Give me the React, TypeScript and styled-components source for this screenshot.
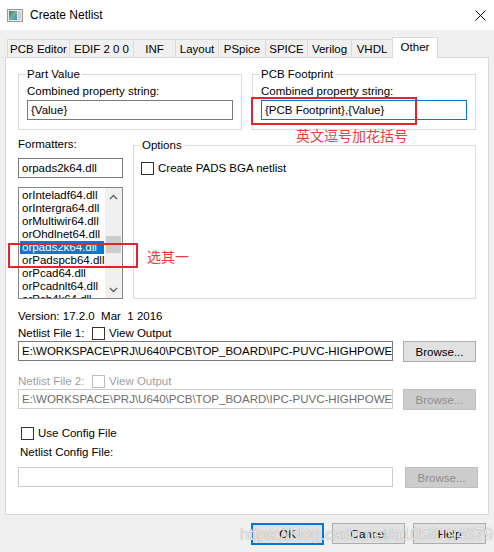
import React from 'react';
import styled, { createGlobalStyle } from 'styled-components';

const Global = createGlobalStyle`
  html, body { margin: 0; padding: 0; background: #f0f0f0; }
  body { font-family: "Liberation Sans", Arial, sans-serif; font-size: 11px; color: #000; }
  * { box-sizing: border-box; }
`;

const Window = styled.div`
  width: 494px;
  height: 552px;
  background: #f0f0f0;
  display: flex;
  flex-direction: column;
  position: relative;
  overflow: hidden;
`;

const TitleBar = styled.div`
  height: 30px;
  background: #fff;
  display: flex;
  align-items: center;
  padding-left: 7px;
  padding-right: 8px;
  gap: 7px;
  flex-shrink: 0;
`;

const TitleText = styled.span`
  font-size: 12px;
  color: #000;
`;

const CloseBtn = styled.div`
  margin-left: auto;
  width: 11px;
  height: 11px;
  display: flex;
`;

const Body = styled.div`
  padding: 7px 5px 0 5px;
  display: flex;
  flex-direction: column;
`;

const TabStrip = styled.div`
  display: flex;
  align-items: flex-end;
  padding-left: 2px;
  height: 21px;
  position: relative;
  z-index: 1;
  margin-bottom: -1px;
`;

const Tab = styled.div<{ $w: number; $active?: boolean }>`
  width: ${(p) => p.$w}px;
  height: ${(p) => (p.$active ? 21 : 19)}px;
  border: 1px solid #d9d9d9;
  border-right: ${(p) => (p.$active ? '1px solid #d9d9d9' : 'none')};
  border-bottom: ${(p) => (p.$active ? 'none' : '1px solid #d9d9d9')};
  background: ${(p) => (p.$active ? '#fff' : '#f0f0f0')};
  display: flex;
  align-items: center;
  justify-content: center;
  font-size: 11.5px;
  padding-bottom: ${(p) => (p.$active ? 3 : 0)}px;
`;

const Panel = styled.div`
  height: 458px;
  border: 1px solid #d9d9d9;
  background: #fff;
  padding: 9px 12px 0 12px;
  display: flex;
  flex-direction: column;
`;

const Row = styled.div<{ $gap?: number; $mt?: number }>`
  display: flex;
  gap: ${(p) => p.$gap ?? 0}px;
  margin-top: ${(p) => p.$mt ?? 0}px;
  align-items: flex-start;
`;

const Group = styled.fieldset<{ $w: number; $h?: number; $mt?: number }>`
  margin: ${(p) => p.$mt ?? 0}px 0 0 0;
  padding: 0 8px 9px 8px;
  border: 1px solid #dcdcdc;
  width: ${(p) => p.$w}px;
  ${(p) => (p.$h ? `height: ${p.$h}px;` : '')}
  min-width: 0;
  display: block;
`;

const Legend = styled.legend`
  padding: 0 2px;
  margin-left: -2px;
  line-height: 15px;
  font-size: 11.5px;
`;

const Label = styled.div<{ $mt?: number; $ml?: number; $w?: number; $disabled?: boolean }>`
  line-height: 15px;
  font-size: 11.5px;
  margin-top: ${(p) => p.$mt ?? 0}px;
  margin-left: ${(p) => p.$ml ?? 0}px;
  ${(p) => (p.$w ? `width: ${p.$w}px; flex-shrink: 0;` : '')}
  color: ${(p) => (p.$disabled ? '#a0a0a0' : '#000')};
  white-space: nowrap;
`;

const TextBox = styled.div<{ $w?: number; $mt?: number; $focus?: boolean; $disabled?: boolean }>`
  width: ${(p) => (p.$w ? `${p.$w}px` : '100%')};
  height: 20px;
  margin-top: ${(p) => p.$mt ?? 0}px;
  border: 1px solid ${(p) => (p.$focus ? '#0078d7' : p.$disabled ? '#cccccc' : '#7a7a7a')};
  background: #fff;
  color: ${(p) => (p.$disabled ? '#6d6d6d' : '#000')};
  font-size: 11.5px;
  line-height: 18px;
  padding-left: 3px;
  white-space: nowrap;
  overflow: hidden;
  flex-shrink: 0;
`;

const Button = styled.div<{ $w?: number; $disabled?: boolean; $default?: boolean }>`
  width: ${(p) => p.$w ?? 73}px;
  height: ${(p) => (p.$default ? 22 : 21)}px;
  border: ${(p) => (p.$default ? '2px solid #0078d7' : p.$disabled ? '1px solid #bfbfbf' : '1px solid #adadad')};
  background: ${(p) => (p.$disabled ? '#cccccc' : '#e1e1e1')};
  color: ${(p) => (p.$disabled ? '#8c8c8c' : '#000')};
  display: flex;
  align-items: center;
  justify-content: center;
  font-size: 11.5px;
  flex-shrink: 0;
`;

const CheckRow = styled.div<{ $mt?: number; $ml?: number }>`
  display: flex;
  align-items: center;
  gap: 4px;
  margin-top: ${(p) => p.$mt ?? 0}px;
  margin-left: ${(p) => p.$ml ?? 0}px;
  height: 15px;
  line-height: 15px;
  font-size: 11.5px;
  white-space: nowrap;
`;

const Box = styled.div<{ $disabled?: boolean }>`
  width: 13px;
  height: 13px;
  border: 1px solid ${(p) => (p.$disabled ? '#bcbcbc' : '#333')};
  background: #fff;
  flex-shrink: 0;
`;

const CheckText = styled.span<{ $disabled?: boolean }>`
  color: ${(p) => (p.$disabled ? '#a0a0a0' : '#000')};
`;

const Column = styled.div<{ $w: number }>`
  width: ${(p) => p.$w}px;
  display: flex;
  flex-direction: column;
  flex-shrink: 0;
`;

const ListBox = styled.div`
  margin-top: 9px;
  width: 105px;
  height: 112px;
  border: 1px solid #828790;
  display: flex;
  background: #fff;
`;

const ListItems = styled.div`
  flex: 1;
  padding: 1px 1px 0 1px;
  overflow: hidden;
`;

const ListItem = styled.div<{ $sel?: boolean }>`
  height: 13px;
  line-height: 13px;
  font-size: 11.5px;
  padding-left: 2px;
  background: ${(p) => (p.$sel ? '#0078d7' : 'transparent')};
  color: ${(p) => (p.$sel ? '#fff' : '#000')};
  white-space: nowrap;
`;

const ScrollBar = styled.div`
  width: 17px;
  background: #f0f0f0;
  display: flex;
  flex-direction: column;
`;

const ScrollBtn = styled.div`
  height: 17px;
  display: flex;
  align-items: center;
  justify-content: center;
  flex-shrink: 0;
`;

const Track = styled.div`
  flex: 1;
  display: flex;
  flex-direction: column;
`;

const Thumb = styled.div`
  height: 17px;
  background: #cdcdcd;
  margin: 0 1px;
`;

const Footer = styled.div`
  display: flex;
  justify-content: flex-end;
  gap: 8px;
  padding: 8px 3px 0 0;
`;

const Annot = styled.div`
  position: absolute;
  border: 2px solid #e3242b;
`;

const AnnotText = styled.div`
  position: absolute;
  color: #ee3b3b;
  font-family: "Noto Sans CJK SC", sans-serif;
  font-size: 14px;
  line-height: 18px;
  white-space: nowrap;
`;

const Watermark = styled.div`
  position: absolute;
  left: 240px;
  top: 524px;
  font-family: "Liberation Sans", Arial, sans-serif;
  font-size: 16.5px;
  line-height: 20px;
  color: rgba(250, 250, 250, 0.85);
  text-shadow: 0 0 1px rgba(120, 120, 120, 0.9);
  white-space: nowrap;
  pointer-events: none;
`;

const Chevron = ({ up }: { up?: boolean }) => (
  <svg width="9" height="6" viewBox="0 0 9 6">
    <path
      d={up ? 'M1 5 L4.5 1.5 L8 5' : 'M1 1 L4.5 4.5 L8 1'}
      stroke="#606060"
      strokeWidth="1.4"
      fill="none"
    />
  </svg>
);

const AppIcon = () => (
  <svg width="16" height="13" viewBox="0 0 16 13">
    <defs>
      <linearGradient id="g" x1="0" y1="0" x2="1" y2="1">
        <stop offset="0" stopColor="#3b7a5e" />
        <stop offset="0.5" stopColor="#6fb3a0" />
        <stop offset="1" stopColor="#4a86c5" />
      </linearGradient>
    </defs>
    <rect x="0.5" y="0.5" width="15" height="12" fill="#e8e8e8" stroke="#9a9a9a" />
    <rect x="2" y="2" width="8" height="9" fill="url(#g)" />
    <rect x="11" y="2" width="3" height="9" fill="#d0d0d0" />
  </svg>
);

const tabs: [string, number][] = [
  ['PCB Editor', 62],
  ['EDIF 2 0 0', 64],
  ['INF', 42],
  ['Layout', 43],
  ['PSpice', 47],
  ['SPICE', 42],
  ['Verilog', 44],
  ['VHDL', 41],
];

const items = [
  'orInteladf64.dll',
  'orIntergra64.dll',
  'orMultiwir64.dll',
  'orOhdlnet64.dll',
  'orpads2k64.dll',
  'orPadspcb64.dll',
  'orPcad64.dll',
  'orPcadnlt64.dll',
  'orPcb4k64.dll',
];

const PATH = 'E:\\WORKSPACE\\PRJ\\U640\\PCB\\TOP_BOARD\\IPC-PUVC-HIGHPOWER-V1.0';

export default function App() {
  return (
    <>
      <Global />
      <Window>
        <TitleBar>
          <AppIcon />
          <TitleText>Create Netlist</TitleText>
          <CloseBtn>
            <svg width="11" height="11" viewBox="0 0 11 11">
              <path d="M0.5 0.5 L10.5 10.5 M10.5 0.5 L0.5 10.5" stroke="#000" strokeWidth="1" />
            </svg>
          </CloseBtn>
        </TitleBar>
        <Body>
          <TabStrip>
            {tabs.map(([t, w]) => (
              <Tab key={t} $w={w}>
                {t}
              </Tab>
            ))}
            <Tab $w={46} $active>
              Other
            </Tab>
          </TabStrip>
          <Panel>
            <Row $gap={10}>
              <Group $w={224}>
                <Legend>Part Value</Legend>
                <Label $mt={2}>Combined property string:</Label>
                <TextBox $mt={1}>{'{Value}'}</TextBox>
              </Group>
              <Group $w={224}>
                <Legend>PCB Footprint</Legend>
                <Label $mt={2}>Combined property string:</Label>
                <TextBox $mt={1} $focus>
                  {'{PCB Footprint},{Value}'}
                </TextBox>
              </Group>
            </Row>
            <Row $gap={10} $mt={7}>
              <Column $w={105}>
                <Label>Formatters:</Label>
                <TextBox $mt={6}>orpads2k64.dll</TextBox>
                <ListBox>
                  <ListItems>
                    {items.map((it, i) => (
                      <ListItem key={it} $sel={i === 4}>
                        {it}
                      </ListItem>
                    ))}
                  </ListItems>
                  <ScrollBar>
                    <ScrollBtn>
                      <Chevron up />
                    </ScrollBtn>
                    <Track>
                      <Thumb style={{ marginTop: 31 }} />
                    </Track>
                    <ScrollBtn>
                      <Chevron />
                    </ScrollBtn>
                  </ScrollBar>
                </ListBox>
              </Column>
              <Group $w={345} $h={161} $mt={1}>
                <Legend>Options</Legend>
                <CheckRow $mt={8} $ml={-1}>
                  <Box />
                  <span>Create PADS BGA netlist</span>
                </CheckRow>
              </Group>
            </Row>
            <Label $mt={10}>Version: 17.2.0&nbsp;&nbsp;Mar&nbsp;&nbsp;1 2016</Label>
            <Row $mt={2}>
              <Label $w={74}>Netlist File 1:</Label>
              <CheckRow>
                <Box />
                <CheckText>View Output</CheckText>
              </CheckRow>
            </Row>
            <Row $gap={10} $mt={0}>
              <TextBox $w={375}>{PATH}</TextBox>
              <Button $w={73}>Browse...</Button>
            </Row>
            <Row $mt={12}>
              <Label $w={74} $disabled>
                Netlist File 2:
              </Label>
              <CheckRow>
                <Box $disabled />
                <CheckText $disabled>View Output</CheckText>
              </CheckRow>
            </Row>
            <Row $gap={10} $mt={0}>
              <TextBox $w={375} $disabled>
                {PATH}
              </TextBox>
              <Button $w={73} $disabled>
                Browse...
              </Button>
            </Row>
            <CheckRow $mt={16} $ml={3}>
              <Box />
              <span>Use Config File</span>
            </CheckRow>
            <Label $mt={4} $ml={2}>
              Netlist Config File:
            </Label>
            <Row $gap={12} $mt={7}>
              <TextBox $w={375} $disabled />
              <Button $w={73} $disabled>
                Browse...
              </Button>
            </Row>
          </Panel>
          <Footer>
            <Button $default>OK</Button>
            <Button>Cancel</Button>
            <Button>Help</Button>
          </Footer>
        </Body>
        <Annot style={{ left: 251, top: 97, width: 166, height: 28 }} />
        <AnnotText style={{ left: 296, top: 126 }}>英文逗号加花括号</AnnotText>
        <Annot style={{ left: 8, top: 243, width: 130, height: 25 }} />
        <AnnotText style={{ left: 147, top: 247 }}>选其一</AnnotText>
        <Watermark>https://blog.csdn.net/a1058194679</Watermark>
      </Window>
    </>
  );
}
